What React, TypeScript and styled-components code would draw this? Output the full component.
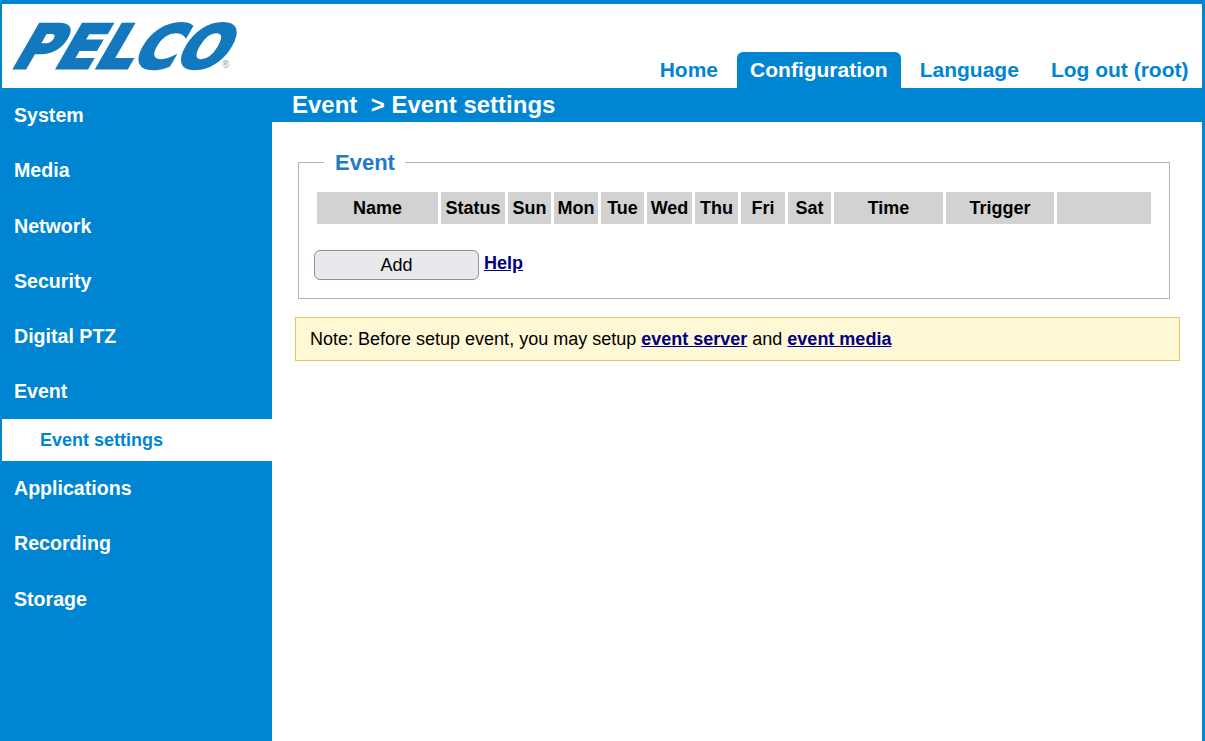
import styled, { createGlobalStyle } from "styled-components";

const BLUE = "#0085d2";

const GlobalStyle = createGlobalStyle`
  html, body {
    margin: 0;
    padding: 0;
    height: 100%;
    overflow: hidden;
    background: #fff;
    font-family: "Liberation Sans", Arial, sans-serif;
  }
`;

const sideItems = ["System", "Media", "Network", "Security", "Digital PTZ", "Event"];
const sideItemsAfter = ["Applications", "Recording", "Storage"];

const columns: { label: string; width: number }[] = [
  { label: "Name", width: 121 },
  { label: "Status", width: 64 },
  { label: "Sun", width: 43 },
  { label: "Mon", width: 44 },
  { label: "Tue", width: 43 },
  { label: "Wed", width: 45 },
  { label: "Thu", width: 43 },
  { label: "Fri", width: 44 },
  { label: "Sat", width: 43 },
  { label: "Time", width: 109 },
  { label: "Trigger", width: 108 },
  { label: "", width: 94 },
];

//Logo, kept as real text slanted in the svg
function Logo() {
  return (
    <LogoSvg viewBox="-8 0 268 84" aria-label="Pelco">
      <text
        x="0"
        y="64.5"
        transform="translate(36.5 0) skewX(-30) scale(0.97 1)"
        fontFamily="'DejaVu Sans', sans-serif"
        fontWeight="700"
        fontSize="60"
        fill="#1378bd"
        stroke="#1378bd"
        strokeWidth="3"
      >
        PELCO
      </text>
      <text x="212" y="64" fontFamily="'Liberation Sans', Arial, sans-serif" fontSize="10" fill="#7fa6bf">
        ®
      </text>
    </LogoSvg>
  );
}

function App() {
  return (
    <>
      <GlobalStyle />
      <Frame>
        <Header>
          <LogoBox>
            <Logo />
          </LogoBox>
          <Tabs>
            <Tab>Home</Tab>
            <Tab $active>Configuration</Tab>
            <Tab>Language</Tab>
            <Tab>Log out (root)</Tab>
          </Tabs>
        </Header>
        <Body>
          <Sidebar>
            {sideItems.map((item) => (
              <SideItem key={item}>{item}</SideItem>
            ))}
            <SubItem>Event settings</SubItem>
            {sideItemsAfter.map((item) => (
              <SideItem key={item}>{item}</SideItem>
            ))}
          </Sidebar>
          <Main>
            <TitleBar>Event&nbsp; &gt; Event settings</TitleBar>
            <Content>
              <EventBox>
                <EventLegend>Event</EventLegend>
                <EventTable>
                  <thead>
                    <tr>
                      {columns.map((col, i) => (
                        <HeadCell key={i} $width={col.width}>
                          {col.label}
                        </HeadCell>
                      ))}
                    </tr>
                  </thead>
                </EventTable>
                <Actions>
                  <AddButton type="button">Add</AddButton>
                  <HelpLink href="#">Help</HelpLink>
                </Actions>
              </EventBox>
              <Note>
                Note: Before setup event, you may setup <TextLink href="#">event server</TextLink> and{" "}
                <TextLink href="#">event media</TextLink>
              </Note>
            </Content>
          </Main>
        </Body>
      </Frame>
    </>
  );
}

const Frame = styled.div`
  height: 741px;
  box-sizing: border-box;
  border-top: 4px solid ${BLUE};
  border-left: 2px solid ${BLUE};
  border-right: 3px solid ${BLUE};
  display: flex;
  flex-direction: column;
  overflow: hidden;
`;

const Header = styled.header`
  height: 84px;
  flex: none;
  display: flex;
  justify-content: space-between;
  align-items: flex-end;
`;

const LogoBox = styled.div`
  line-height: 0;
`;

const LogoSvg = styled.svg`
  width: 268px;
  height: 84px;
`;

const Tabs = styled.nav`
  display: flex;
  align-items: flex-end;
  gap: 5px;
`;

const Tab = styled.a<{ $active?: boolean }>`
  height: 36px;
  box-sizing: border-box;
  padding: 0 13.5px;
  display: flex;
  align-items: center;
  font-size: 21px;
  font-weight: 700;
  color: ${(props) => (props.$active ? "#fff" : BLUE)};
  background: ${(props) => (props.$active ? BLUE : "transparent")};
  border-radius: 6px 6px 0 0;
`;

const Body = styled.div`
  flex: 1;
  display: flex;
  min-height: 0;
`;

const Sidebar = styled.aside`
  width: 270px;
  flex: none;
  background: ${BLUE};
`;

const SideItem = styled.div`
  height: 55.25px;
  box-sizing: border-box;
  padding-left: 12px;
  display: flex;
  align-items: center;
  font-size: 19.6px;
  font-weight: 700;
  color: #fff;
`;

const SubItem = styled.div`
  height: 42px;
  box-sizing: border-box;
  margin-top: -0.4px;
  background: #fff;
  padding: 1px 0 0 38px;
  display: flex;
  align-items: center;
  font-size: 18px;
  font-weight: 700;
  color: ${BLUE};
`;

const Main = styled.main`
  flex: 1;
  min-width: 0;
  display: flex;
  flex-direction: column;
`;

const TitleBar = styled.div`
  height: 34px;
  flex: none;
  background: ${BLUE};
  padding-left: 20px;
  font-size: 24px;
  font-weight: 700;
  line-height: 34px;
  color: #fff;
`;

const Content = styled.div`
  padding: 27px 22px 0 23px;
`;

const EventBox = styled.fieldset`
  margin: 0 10px 18px 3px;
  padding: 17px 18px 18px 18px;
  border: 1px solid #b5b5b5;
  height: 150px;
  box-sizing: border-box;
`;

const EventLegend = styled.legend`
  margin-left: 7px;
  padding: 2px 10px 0 11px;
  font-size: 22px;
  font-weight: 700;
  color: #2279c9;
  line-height: 24px;
`;

const EventTable = styled.table`
  border-collapse: separate;
  border-spacing: 0;
  table-layout: fixed;
  width: 834px;
`;

const HeadCell = styled.th<{ $width: number }>`
  width: ${(props) => props.$width}px;
  height: 32px;
  padding: 0;
  box-sizing: content-box;
  border-right: 3px solid #fff;
  background: #d2d2d2;
  background-clip: padding-box;
  font-size: 18px;
  font-weight: 700;
  color: #000;
  text-align: center;

  &:last-child {
    border-right: 0;
  }
`;

const Actions = styled.div`
  display: flex;
  align-items: flex-start;
  gap: 5px;
  margin: 26px 0 0 -3px;
`;

const AddButton = styled.button`
  width: 165px;
  height: 30px;
  padding: 0;
  border: 1px solid #8f8f9d;
  border-radius: 6px;
  background: #e9e9ed;
  font-family: "Liberation Sans", Arial, sans-serif;
  font-size: 18px;
  color: #000;
`;

const TextLink = styled.a`
  font-size: 18px;
  font-weight: 700;
  color: #000080;
  text-decoration: underline;
`;

const HelpLink = styled(TextLink)`
  margin-top: 3px;
`;

const Note = styled.div`
  height: 44px;
  box-sizing: border-box;
  border: 1px solid #e3c95f;
  background: #fff8d6;
  padding: 0 14px;
  font-size: 18px;
  line-height: 42px;
  color: #000;
`;

export default App;
